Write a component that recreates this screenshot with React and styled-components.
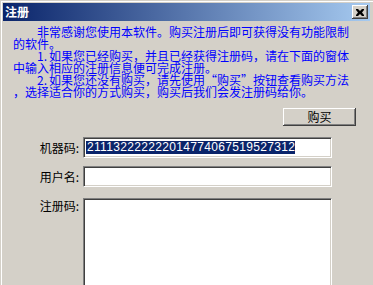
import React from "react";
import styled, { createGlobalStyle } from "styled-components";

const Global = createGlobalStyle`
  html, body { margin: 0; padding: 0; background: #d4d0c8; overflow: hidden; }
  body { width: 373px; height: 285px; font-family: "Noto Sans CJK SC", "Noto Sans", sans-serif; }
`;

const Window = styled.div`
  width: 373px;
  height: 285px;
  box-sizing: border-box;
  padding: 3px 3px 0 3px;
  background: #d4d0c8;
  box-shadow: inset 1px 1px 0 #d4d0c8, inset 2px 2px 0 #ffffff;
  overflow: hidden;
`;

const TitleBar = styled.div`
  height: 18px;
  display: flex;
  align-items: center;
  justify-content: space-between;
  padding: 0 2px 0 2px;
  background: linear-gradient(to right, #0a246a, #a6caf0);
`;

const TitleText = styled.span`
  color: #ffffff;
  font-weight: bold;
  font-size: 12px;
  line-height: 12px;
`;

const CloseButton = styled.div`
  width: 16px;
  height: 14px;
  box-sizing: border-box;
  background: #d4d0c8;
  display: flex;
  align-items: center;
  justify-content: center;
  box-shadow: inset -1px -1px 0 #404040, inset 1px 1px 0 #ffffff,
    inset -2px -2px 0 #808080;
`;

const Content = styled.div`
  padding: 5px 0 0 10px;
`;

const Para = styled.div`
  width: 336px;
  color: #0000ff;
  font-size: 12px;
  line-height: 12px;
`;

const Line = styled.div`
  white-space: pre;
  height: 12px;
  padding-left: ${(p) => (p.$indent ? "24px" : "0")};
`;

const Num = styled.span`
  display: inline-block;
  width: 12px;
`;

const ButtonRow = styled.div`
  display: flex;
  justify-content: flex-end;
  padding-right: 14px;
  margin-top: 10px;
`;

const Button = styled.div`
  width: 73px;
  height: 18px;
  box-sizing: border-box;
  display: flex;
  align-items: center;
  justify-content: center;
  font-size: 12px;
  line-height: 12px;
  color: #000;
  background: #d4d0c8;
  box-shadow: inset -1px -1px 0 #404040, inset 1px 1px 0 #ffffff,
    inset -2px -2px 0 #808080;
`;

const Form = styled.div`
  display: grid;
  grid-template-columns: 70px 249px;
  row-gap: 8px;
  margin-top: 11px;
  align-items: center;
`;

const Label = styled.div`
  font-size: 12px;
  line-height: 12px;
  color: #000;
  text-align: right;
  padding-right: 4px;
  align-self: ${(p) => (p.$top ? "start" : "center")};
  margin-top: ${(p) => (p.$top ? "5px" : "0")};
`;

const Field = styled.div`
  height: ${(p) => p.$h || 21}px;
  box-sizing: border-box;
  background: #ffffff;
  border-top: 1px solid #808080;
  border-left: 1px solid #808080;
  border-bottom: 1px solid #ffffff;
  border-right: 1px solid #ffffff;
  box-shadow: inset 1px 1px 0 #404040, inset -1px -1px 0 #d4d0c8;
  display: flex;
  align-items: center;
  padding-left: 2px;
  margin-top: ${(p) => (p.$gap ? p.$gap : 0)}px;
`;

const Selected = styled.span`
  background: #0a246a;
  color: #ffffff;
  font-family: "Liberation Sans", "DejaVu Sans", sans-serif;
  font-size: 12px;
  line-height: 13px;
  height: 13px;
  letter-spacing: 0.33px;
  padding: 0 0 0 1px;
`;

export default function App() {
  return (
    <>
      <Global />
      <Window>
        <TitleBar>
          <TitleText>注册</TitleText>
          <CloseButton>
            <svg width="8" height="7" viewBox="0 0 8 7">
              <path
                d="M0 0h2l2 2 2-2h2v1L6 3.5 8 6v1H6L4 5 2 7H0V6l2-2.5L0 1z"
                fill="#000"
              />
            </svg>
          </CloseButton>
        </TitleBar>
        <Content>
          <Para>
            <Line $indent>非常感谢您使用本软件。购买注册后即可获得没有功能限制</Line>
            <Line>的软件。</Line>
            <Line $indent>
              <Num>1.</Num>如果您已经购买，并且已经获得注册码，请在下面的窗体
            </Line>
            <Line>中输入相应的注册信息便可完成注册。</Line>
            <Line $indent>
              <Num>2.</Num>如果您还没有购买，请先使用“购买”按钮查看购买方法
            </Line>
            <Line>，选择适合你的方式购买，购买后我们会发注册码给你。</Line>
          </Para>
          <ButtonRow>
            <Button>购买</Button>
          </ButtonRow>
          <Form>
            <Label>机器码:</Label>
            <Field>
              <Selected>211132222222014774067519527312</Selected>
            </Field>
            <Label>用户名:</Label>
            <Field />
            <Label $top>注册码:</Label>
            <Field $h={100} $gap={3} />
          </Form>
        </Content>
      </Window>
    </>
  );
}
